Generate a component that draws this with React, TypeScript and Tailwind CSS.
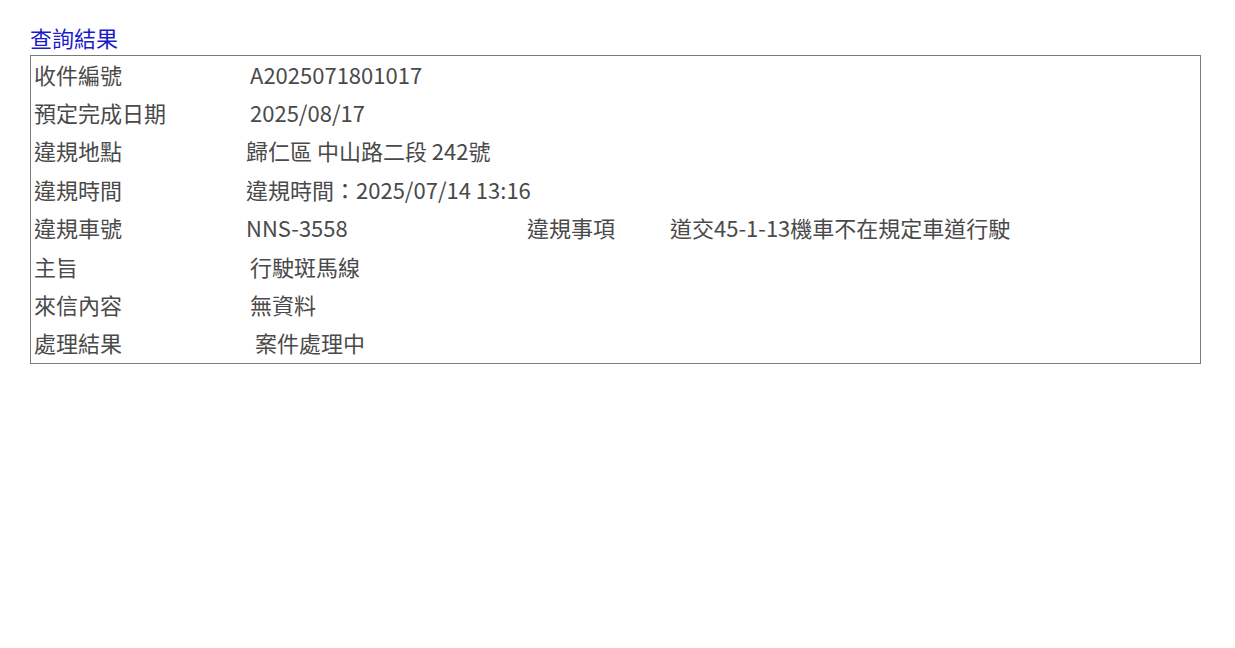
const rows: { label: string; value: string; pad?: string }[] = [
  { label: "收件編號", value: "A2025071801017", pad: "pl-[4px]" },
  { label: "預定完成日期", value: "2025/08/17", pad: "pl-[4px]" },
  { label: "違規地點", value: "歸仁區 中山路二段 242號" },
  { label: "違規時間", value: "違規時間：2025/07/14 13:16" },
]

const rowsAfter: { label: string; value: string; pad?: string }[] = [
  { label: "主旨", value: "行駛斑馬線", pad: "pl-[4px]" },
  { label: "來信內容", value: "無資料", pad: "pl-[4px]" },
  { label: "處理結果", value: "案件處理中", pad: "pl-[9px]" },
]

export default function App() {
  return (
    <div
      className="min-h-screen bg-white pl-[30px] pt-[23px] text-[22px] text-[#4a4a4a]"
      style={{ fontFamily: '"Noto Sans CJK TC", "Noto Sans", sans-serif' }}
    >
      <h3 className="h-[28px] leading-[28px] text-[#1a1acc]">查詢結果</h3>
      <div className="mt-[4px] w-[1171px] border border-[#7a7a7a] pl-[3px]">
        {rows.map((r) => (
          <div key={r.label} className="flex h-[38.4px] items-center pb-[2px]">
            <div className="w-[212px] shrink-0">{r.label}</div>
            <div className={r.pad}>{r.value}</div>
          </div>
        ))}

        {/* plate + violation item share one row */}
        <div className="flex h-[38.4px] items-center pb-[2px]">
          <div className="w-[212px] shrink-0">違規車號</div>
          <div className="w-[281px] shrink-0">NNS-3558</div>
          <div className="w-[143px] shrink-0">違規事項</div>
          <div>道交45-1-13機車不在規定車道行駛</div>
        </div>

        {rowsAfter.map((r) => (
          <div key={r.label} className="flex h-[38.4px] items-center pb-[2px]">
            <div className="w-[212px] shrink-0">{r.label}</div>
            <div className={r.pad}>{r.value}</div>
          </div>
        ))}
      </div>
    </div>
  )
}
